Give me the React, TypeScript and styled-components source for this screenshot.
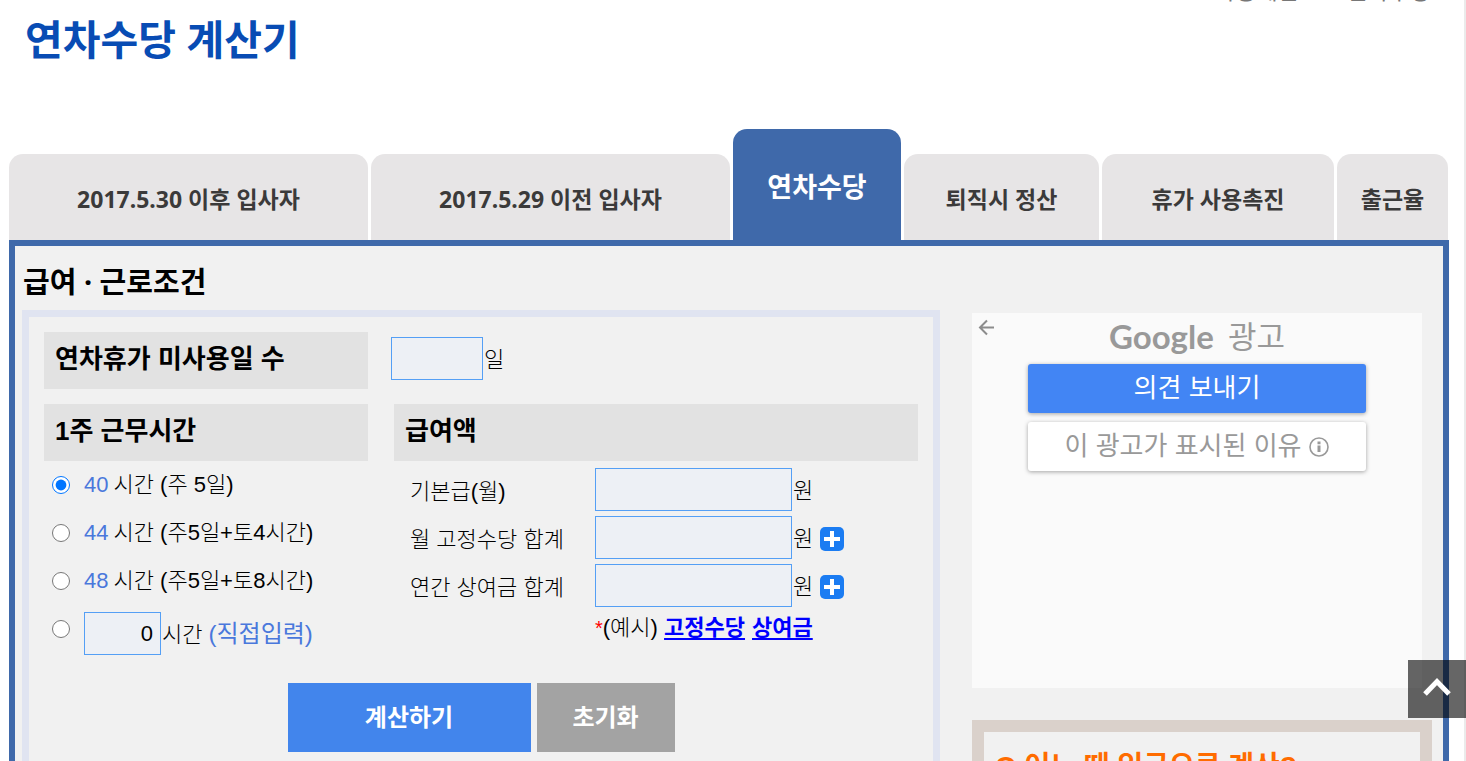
import React from "react";
import styled, { createGlobalStyle } from "styled-components";

const bodyFont = `"Liberation Sans", "Noto Sans CJK KR", sans-serif`;
const headFont = `"Noto Sans", "Noto Sans CJK KR", sans-serif`;

const GlobalStyle = createGlobalStyle`
  *, *::before, *::after { box-sizing: border-box; }
  body { margin: 0; background: #fff; color: #000; font-family: ${bodyFont}; }
  button, input { font-family: inherit; }
`;

const Page = styled.div`
  height: 100vh;
  overflow: hidden;
  padding: 0 15px 0 9px;
  border-right: 2px solid #ebebeb;
`;

const Breadcrumb = styled.nav`
  display: flex;
  align-items: flex-end;
  justify-content: flex-end;
  gap: 17px;
  height: 6px;
  padding-right: 18px;
  overflow: hidden;
  color: #777;
  font-size: 23px;
  line-height: 30px;
  white-space: nowrap;
`;

const PageTitle = styled.h1`
  margin: 0;
  padding-left: 16px;
  height: 123px;
  color: #084cb4;
  font-family: ${headFont};
  font-size: 41px;
  line-height: 66px;
  font-weight: 700;
`;

const Tabs = styled.nav`
  display: flex;
  align-items: flex-end;
  gap: 3px;
  padding-right: 1px;
`;

const Tab = styled.a<{ $grow: number; $active?: boolean }>`
  flex: ${(p) => p.$grow} 1 0;
  display: flex;
  align-items: center;
  justify-content: center;
  height: ${(p) => (p.$active ? 111 : 86)}px;
  padding-top: 2px;
  border-radius: 14px 14px 0 0;
  background: ${(p) => (p.$active ? "#3f69aa" : "#e7e5e6")};
  color: ${(p) => (p.$active ? "#fff" : "#3b3a3a")};
  font-family: ${headFont};
  font-size: ${(p) => (p.$active ? 27 : 23)}px;
  font-weight: 700;
  text-decoration: none;
  white-space: nowrap;
`;

const Panel = styled.main`
  display: grid;
  grid-template-columns: minmax(0, 1fr) 460px;
  gap: 32px;
  padding: 0 11px 40px 7px;
  border: 6px solid #3f69aa;
  background: #f1f1f1;
`;

const SectionTitle = styled.h2`
  margin: 0;
  font-family: ${headFont};
  font-size: 29px;
  line-height: 64px;
  padding: 4px 0 0 1px;
  height: 64px;
  font-weight: 700;
`;

const Form = styled.form`
  padding: 15px 15px 60px;
  border: 7px solid #e0e4f1;
  font-size: 22px;
  font-weight: 300;
`;

const DaysRow = styled.div`
  display: flex;
  align-items: flex-start;
  gap: 23px;
  margin-bottom: 15px;
`;

const Columns = styled.div`
  display: grid;
  grid-template-columns: 324px minmax(0, 1fr);
  gap: 26px;
`;

const Group = styled.section`
  min-width: 0;
`;

const headingStyle = `
  display: block;
  margin: 0;
  padding-left: 11px;
  height: 57px;
  background: #e2e2e2;
  font-size: 26px;
  line-height: 54px;
  font-weight: 700;
  white-space: nowrap;
`;

const GroupTitle = styled.h3`
  ${headingStyle}
`;

const DaysLabel = styled.label`
  ${headingStyle}
  width: 324px;
`;

const Field = styled.span`
  display: flex;
  align-items: center;
  gap: 1px;
  white-space: nowrap;
`;

const DaysField = styled(Field)`
  margin-top: 5px;
`;

const Unit = styled.span`
  padding-bottom: 4px;
`;

const NumberInput = styled.input<{ $width: number }>`
  width: ${(p) => p.$width}px;
  height: 43px;
  padding: 0 7px;
  border: 1px solid #549ff5;
  border-radius: 0;
  background: #edf0f5;
  color: #000;
  font-size: 22px;
  text-align: right;
`;

const HourRow = styled.div`
  display: flex;
  align-items: center;
  gap: 14px;
  height: 48px;
  padding-left: 8px;
  white-space: nowrap;
`;

const Radio = styled.input`
  width: 18px;
  height: 18px;
  margin: 0;
`;

const HourLabel = styled.label`
  display: flex;
  align-items: baseline;
  gap: 5px;
  padding-bottom: 6px;
`;

const CustomField = styled(Field)`
  align-self: flex-start;
  margin-top: 7px;
`;

const CustomLabel = styled.label`
  padding-bottom: 4px;
`;

const Blue = styled.span`
  color: #4a78dc;
`;

const BlueNote = styled(Blue)`
  margin-left: 6px;
  font-size: 24px;
  font-weight: 400;
`;

const PayRows = styled.div`
  display: grid;
  gap: 5px;
  padding: 7px 0 0 16px;
`;

const PayRow = styled.div`
  display: grid;
  grid-template-columns: 185px minmax(0, 1fr);
  align-items: center;
  white-space: nowrap;
`;

const PayLabel = styled.label`
  padding-bottom: 2px;
`;

const PlusButton = styled.button`
  display: block;
  width: 24px;
  height: 24px;
  margin: 3px 0 0 6px;
  padding: 0;
  border: 0;
  border-radius: 5px;
  background: #1b7cf2;
  svg { display: block; }
`;

const Examples = styled.p`
  margin: 0;
  padding-left: 201px;
  line-height: 42px;
  white-space: nowrap;
  a { color: #00f; font-weight: 700; text-underline-offset: 3px; text-decoration-thickness: 2px; }
  a + a { margin-left: 7px; }
`;

const Star = styled.span`
  color: #f00;
  font-size: 20px;
`;

const Actions = styled.div`
  display: flex;
  justify-content: center;
  gap: 6px;
  margin-top: 30px;
`;

const ActionButton = styled.button<{ $primary?: boolean }>`
  width: ${(p) => (p.$primary ? 243 : 138)}px;
  height: 69px;
  padding: 0 0 4px;
  border: 0;
  background: ${(p) => (p.$primary ? "#4285ec" : "#a3a3a3")};
  color: #fff;
  font-size: 24px;
  font-weight: 700;
`;

const Sidebar = styled.aside`
  padding-top: 67px;
`;

const Ad = styled.section`
  position: relative;
  display: flex;
  flex-direction: column;
  align-items: center;
  gap: 9px;
  width: 450px;
  height: 375px;
  background: #fafafa;
  color: #999;
`;

const BackButton = styled.button`
  position: absolute;
  top: 6px;
  left: 6px;
  padding: 0;
  border: 0;
  background: none;
  svg { display: block; }
`;

const AdBrand = styled.div`
  display: flex;
  align-items: center;
  gap: 14px;
  height: 42px;
  font-size: 31px;
  font-weight: 400;
  white-space: nowrap;
`;

const Wordmark = styled.span`
  padding-top: 4px;
  font-family: Lato, sans-serif;
  font-size: 33px;
  font-weight: 700;
`;

const AdButton = styled.button<{ $primary?: boolean }>`
  display: flex;
  align-items: center;
  justify-content: center;
  gap: 8px;
  width: 338px;
  height: 49px;
  padding: 0 0 6px;
  border: 0;
  border-radius: 3px;
  background: ${(p) => (p.$primary ? "#4285f4" : "#fff")};
  color: ${(p) => (p.$primary ? "#fff" : "#999")};
  box-shadow: 0 1px 4px rgba(0, 0, 0, 0.35);
  font-size: 26px;
  font-weight: 400;
  white-space: nowrap;
  svg { margin-top: 6px; }
`;

const Guide = styled.section`
  margin-top: 32px;
  height: 260px;
  padding: 14px 11px;
  border: 12px solid #dad1cb;
`;

const GuideTitle = styled.h2`
  margin: 0;
  color: #ff6c00;
  font-size: 28px;
  line-height: 42px;
  font-weight: 700;
  white-space: nowrap;
`;

const TopButton = styled.button`
  position: fixed;
  right: 0;
  bottom: 43px;
  width: 58px;
  height: 58px;
  padding: 0;
  border: 0;
  background: rgba(0, 0, 0, 0.6);
  svg { display: block; }
`;

const tabs = [
  { label: "2017.5.30 이후 입사자", grow: 359 },
  { label: "2017.5.29 이전 입사자", grow: 359 },
  { label: "연차수당", grow: 168, active: true },
  { label: "퇴직시 정산", grow: 195 },
  { label: "휴가 사용촉진", grow: 232 },
  { label: "출근율", grow: 111 },
];

const hours = [
  { value: "40", note: "시간 (주 5일)" },
  { value: "44", note: "시간 (주5일+토4시간)" },
  { value: "48", note: "시간 (주5일+토8시간)" },
];

const pays = [
  { id: "base", label: "기본급(월)", plus: false },
  { id: "fixed", label: "월 고정수당 합계", plus: true },
  { id: "bonus", label: "연간 상여금 합계", plus: true },
];

export default function App() {
  return (
    <Page>
      <GlobalStyle />
      <Breadcrumb>
        <span>자동계산</span>
        <span>&gt;</span>
        <span>연차수당</span>
      </Breadcrumb>
      <PageTitle>연차수당 계산기</PageTitle>
      <Tabs>
        {tabs.map((t) => (
          <Tab key={t.label} href="#" $grow={t.grow} $active={t.active}>
            {t.label}
          </Tab>
        ))}
      </Tabs>
      <Panel>
        <div>
          <SectionTitle>급여 · 근로조건</SectionTitle>
          <Form onSubmit={(e) => e.preventDefault()}>
            <DaysRow>
              <DaysLabel htmlFor="days">연차휴가 미사용일 수</DaysLabel>
              <DaysField>
                <NumberInput id="days" $width={92} />
                <Unit>일</Unit>
              </DaysField>
            </DaysRow>
            <Columns>
              <Group>
                <GroupTitle>1주 근무시간</GroupTitle>
                {hours.map((h, i) => (
                  <HourRow key={h.value}>
                    <Radio type="radio" name="hours" id={`h${h.value}`} defaultChecked={i === 0} />
                    <HourLabel htmlFor={`h${h.value}`}>
                      <Blue>{h.value}</Blue>
                      <span>{h.note}</span>
                    </HourLabel>
                  </HourRow>
                ))}
                <HourRow>
                  <Radio type="radio" name="hours" id="hcustom" />
                  <CustomField>
                    <NumberInput $width={77} defaultValue="0" aria-label="시간" />
                    <CustomLabel htmlFor="hcustom">
                      시간<BlueNote>(직접입력)</BlueNote>
                    </CustomLabel>
                  </CustomField>
                </HourRow>
              </Group>
              <Group>
                <GroupTitle>급여액</GroupTitle>
                <PayRows>
                  {pays.map((p) => (
                    <PayRow key={p.id}>
                      <PayLabel htmlFor={p.id}>{p.label}</PayLabel>
                      <Field>
                        <NumberInput id={p.id} $width={197} />
                        <Unit>원</Unit>
                        {p.plus && (
                          <PlusButton type="button" aria-label="추가">
                            <svg width="24" height="24" viewBox="0 0 24 24">
                              <path d="M12 4v16M4 12h16" stroke="#fff" strokeWidth="4" />
                            </svg>
                          </PlusButton>
                        )}
                      </Field>
                    </PayRow>
                  ))}
                </PayRows>
                <Examples>
                  <Star>*</Star>(예시) <a href="#">고정수당</a>
                  <a href="#">상여금</a>
                </Examples>
              </Group>
            </Columns>
            <Actions>
              <ActionButton type="submit" $primary>
                계산하기
              </ActionButton>
              <ActionButton type="reset">초기화</ActionButton>
            </Actions>
          </Form>
        </div>
        <Sidebar>
          <Ad>
            <BackButton aria-label="뒤로">
              <svg width="17" height="17" viewBox="0 0 17 17" fill="none" stroke="#8c8c8c" strokeWidth="2">
                <path d="M16 8.5H2.5M9 1.5l-7 7 7 7" />
              </svg>
            </BackButton>
            <AdBrand>
              <Wordmark>Google</Wordmark>
              <span>광고</span>
            </AdBrand>
            <AdButton $primary>의견 보내기</AdButton>
            <AdButton>
              이 광고가 표시된 이유
              <svg width="20" height="20" viewBox="0 0 20 20" fill="none" stroke="#999">
                <circle cx="10" cy="10" r="9" strokeWidth="1.6" />
                <path d="M10 8.600v6.400M10 4.600v2.600" strokeWidth="3" />
              </svg>
            </AdButton>
          </Ad>
          <Guide>
            <GuideTitle>Q 어느 때 임금으로 계산?</GuideTitle>
          </Guide>
        </Sidebar>
      </Panel>
      <TopButton aria-label="맨 위로">
        <svg width="58" height="58" viewBox="0 0 58 58" fill="none" stroke="#fff" strokeWidth="5">
          <path d="M17 34l12-12.500 12 12.500" />
        </svg>
      </TopButton>
    </Page>
  );
}
